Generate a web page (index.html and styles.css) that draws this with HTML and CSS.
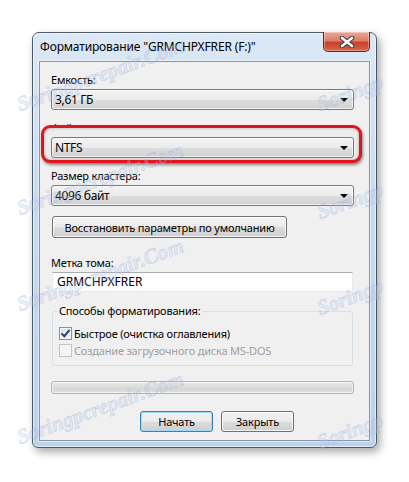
FILE: index.html
```html
<!DOCTYPE html>
<html lang="ru">
  <head>
    <meta charset="UTF-8" />
    <meta name="viewport" content="width=device-width, initial-scale=1.0" />
    <title>Форматирование</title>
    <link rel="stylesheet" href="styles.css">
  </head>
  <body>
    <div class="window">
      <div class="titlebar">
        <span class="title">Форматирование "GRMCHPXFRER (F:)"</span>
        <button class="close">
          <svg width="16" height="12" viewBox="0 0 16 12">
            <path d="M3 2 L13 10 M13 2 L3 10" stroke="#3a3a3a" stroke-width="4.6" stroke-linecap="round" />
            <path d="M3 2 L13 10 M13 2 L3 10" stroke="#fff" stroke-width="2.6" stroke-linecap="round" />
          </svg>
        </button>
      </div>

      <div class="client">
        <div class="field">
          <div class="label">Емкость:</div>
          <div class="combo"><span>3,61 ГБ</span><i class="arrow"></i></div>
        </div>
        <div class="field marked">
          <div class="label">Файловая система:</div>
          <div class="combo"><span>NTFS</span><i class="arrow"></i></div>
        </div>
        <div class="field">
          <div class="label">Размер кластера:</div>
          <div class="combo"><span>4096 байт</span><i class="arrow"></i></div>
        </div>

        <button class="btn restore">Восстановить параметры по умолчанию</button>

        <div class="field volume">
          <div class="label">Метка тома:</div>
          <div class="input">GRMCHPXFRER</div>
        </div>

        <fieldset class="group">
          <legend>Способы форматирования:</legend>
          <div class="check"><i class="box checked"></i><span>Быстрое (очистка оглавления)</span></div>
          <div class="check disabled"><i class="box"></i><span>Создание загрузочного диска MS-DOS</span></div>
        </fieldset>

        <div class="progress"></div>

        <div class="actions">
          <button class="btn default">Начать</button>
          <button class="btn">Закрыть</button>
        </div>
      </div>
    </div>

    <span class="mark" style="left: 22px; top: 92px;">Soringpcrepair.Com</span>
    <span class="mark" style="left: 22px; top: 196px;">Soringpcrepair.Com</span>
    <span class="mark" style="left: 22px; top: 292px;">Soringpcrepair.Com</span>
    <span class="mark" style="left: 22px; top: 425px;">Soringpcrepair.Com</span>
    <span class="mark" style="left: 322px; top: 92px;">Soringp</span>
    <span class="mark" style="left: 322px; top: 200px;">Soringp</span>
    <span class="mark" style="left: 322px; top: 296px;">Soringp</span>
    <span class="mark" style="left: 322px; top: 430px;">Soringp</span>
  </body>
</html>
```

FILE: styles.css
```css
* {
  margin: 0;
  padding: 0;
  box-sizing: border-box;
}

body {
  background: #fff;
  font-family: "Noto Sans", "Open Sans", sans-serif;
  font-size: 11px;
  letter-spacing: -0.2px;
  color: #000;
  width: 409px;
  height: 482px;
  overflow: hidden;
  position: relative;
}

.window {
  margin: 32px 0 0 32px;
  width: 345px;
  border: 1px solid #4b5766;
  border-radius: 7px 7px 6px 6px;
  padding: 0 6px 6px;
  background: linear-gradient(#dce8f5, #c7dbf0 40%, #bcd3ec);
  box-shadow: 3px 4px 9px rgba(0, 0, 0, 0.35), inset 0 0 0 1px rgba(255, 255, 255, 0.6);
}

.titlebar {
  display: flex;
  align-items: flex-start;
  height: 28px;
}
.titlebar .title {
  flex: 1;
  padding-left: 1px;
  font-size: 12px;
  line-height: 28px;
  letter-spacing: -0.15px;
  white-space: nowrap;
}
.titlebar .close {
  margin-top: -1px;
  width: 47px;
  height: 20px;
  border: 1px solid #5a2a24;
  border-top: none;
  border-radius: 0 0 5px 5px;
  background: linear-gradient(#eca79a, #de7f6a 45%, #c8412b 55%, #d5644b);
  box-shadow: inset 0 0 0 1px rgba(255, 255, 255, 0.35);
  display: flex;
  align-items: center;
  justify-content: center;
}

.client {
  border: 1px solid #8596ab;
  background: #f0f0f0;
  padding: 10px 15px 8px 11px;
  box-shadow: 0 0 0 1px rgba(255, 255, 255, 0.5);
}

.field {
  margin-bottom: 10px;
}
.field .label {
  line-height: 16px;
  margin-bottom: 1px;
  white-space: nowrap;
}

.combo {
  height: 21px;
  border: 1px solid #7a7a7a;
  border-radius: 3px;
  background: linear-gradient(#f3f3f3, #ebebeb 50%, #dddddd 51%, #d2d2d2);
  box-shadow: inset 0 0 0 1px rgba(255, 255, 255, 0.7);
  display: flex;
  align-items: center;
  padding: 0 5px 0 3px;
  font-size: 12px;
  letter-spacing: -0.35px;
}
.combo span {
  flex: 1;
}
.combo .arrow {
  width: 0;
  height: 0;
  border-left: 4px solid transparent;
  border-right: 4px solid transparent;
  border-top: 4px solid #000;
}

.field.marked {
  position: relative;
}
.field.marked::before {
  content: "";
  position: absolute;
  left: -10px;
  right: -8px;
  top: 5px;
  bottom: -5px;
  border: 3px solid #e3141c;
  border-radius: 9px;
  background: #ededed;
  box-shadow: 1px 2px 3px rgba(0, 0, 0, 0.45), inset 0 0 3px rgba(0, 0, 0, 0.35);
}
.field.marked .combo {
  position: relative;
}

.btn {
  font: inherit;
  letter-spacing: inherit;
  color: #000;
  height: 21px;
  border: 1px solid #707070;
  border-radius: 3px;
  background: linear-gradient(#f2f2f2, #ebebeb 50%, #dddddd 51%, #cfcfcf);
  box-shadow: inset 0 0 0 1px rgba(255, 255, 255, 0.8);
  width: 73px;
  white-space: nowrap;
}
.btn.restore {
  display: block;
  margin: 1px 0 0 1px;
  width: 235px;
  height: 22px;
}
.btn.default {
  border-color: #3c7fb1;
  box-shadow: inset 0 0 0 1px #9fdaf8;
}

.field.volume {
  margin: 17px 0 10px;
}
.input {
  margin: 0 1px;
  height: 20px;
  background: #fff;
  border: 1px solid #e3e9ef;
  border-top-color: #abadb3;
  padding: 0 4px;
  font-size: 12px;
  letter-spacing: 0;
  line-height: 18px;
}

.group {
  margin: 11px 1px 0;
  border: 1px solid #d5dfe5;
  border-radius: 3px;
  padding: 6px 6px 6px;
}
.group legend {
  margin-left: -2px;
  padding: 0 2px;
  line-height: 16px;
}

.check {
  display: flex;
  align-items: center;
  height: 17px;
  gap: 2px;
  white-space: nowrap;
}
.check .box {
  width: 13px;
  height: 13px;
  border: 1px solid #8e8f8f;
  background: linear-gradient(135deg, #dcdcdc, #fbfbfb);
  box-shadow: inset 0 0 0 1px #f4f4f4;
  display: flex;
  align-items: center;
  justify-content: center;
}
.check .box.checked::after {
  content: "";
  width: 3px;
  height: 7px;
  margin-top: -2px;
  border: solid #2c4378;
  border-width: 0 2px 2px 0;
  transform: rotate(40deg);
}
.check.disabled {
  color: #a0a0a0;
}
.check.disabled .box {
  border-color: #c4c4c4;
  background: #f4f4f4;
  box-shadow: none;
}

.progress {
  margin-top: 15px;
  height: 13px;
  border: 1px solid #b2b2b2;
  border-radius: 3px;
  background: linear-gradient(#eaeaea, #dcdcdc 50%, #d4d4d4 60%, #e2e2e2);
  box-shadow: inset 0 0 0 1px rgba(255, 255, 255, 0.6);
}

.actions {
  display: flex;
  gap: 8px;
  margin: 17px 0 0 89px;
}

.mark {
  position: absolute;
  font-family: "Liberation Serif", serif;
  font-style: italic;
  font-weight: bold;
  font-size: 21px;
  letter-spacing: 0;
  white-space: nowrap;
  color: rgba(190, 205, 238, 0.3);
  -webkit-text-stroke: 0.5px rgba(120, 145, 200, 0.35);
  transform: rotate(-20deg);
  transform-origin: left bottom;
  pointer-events: none;
}
```
